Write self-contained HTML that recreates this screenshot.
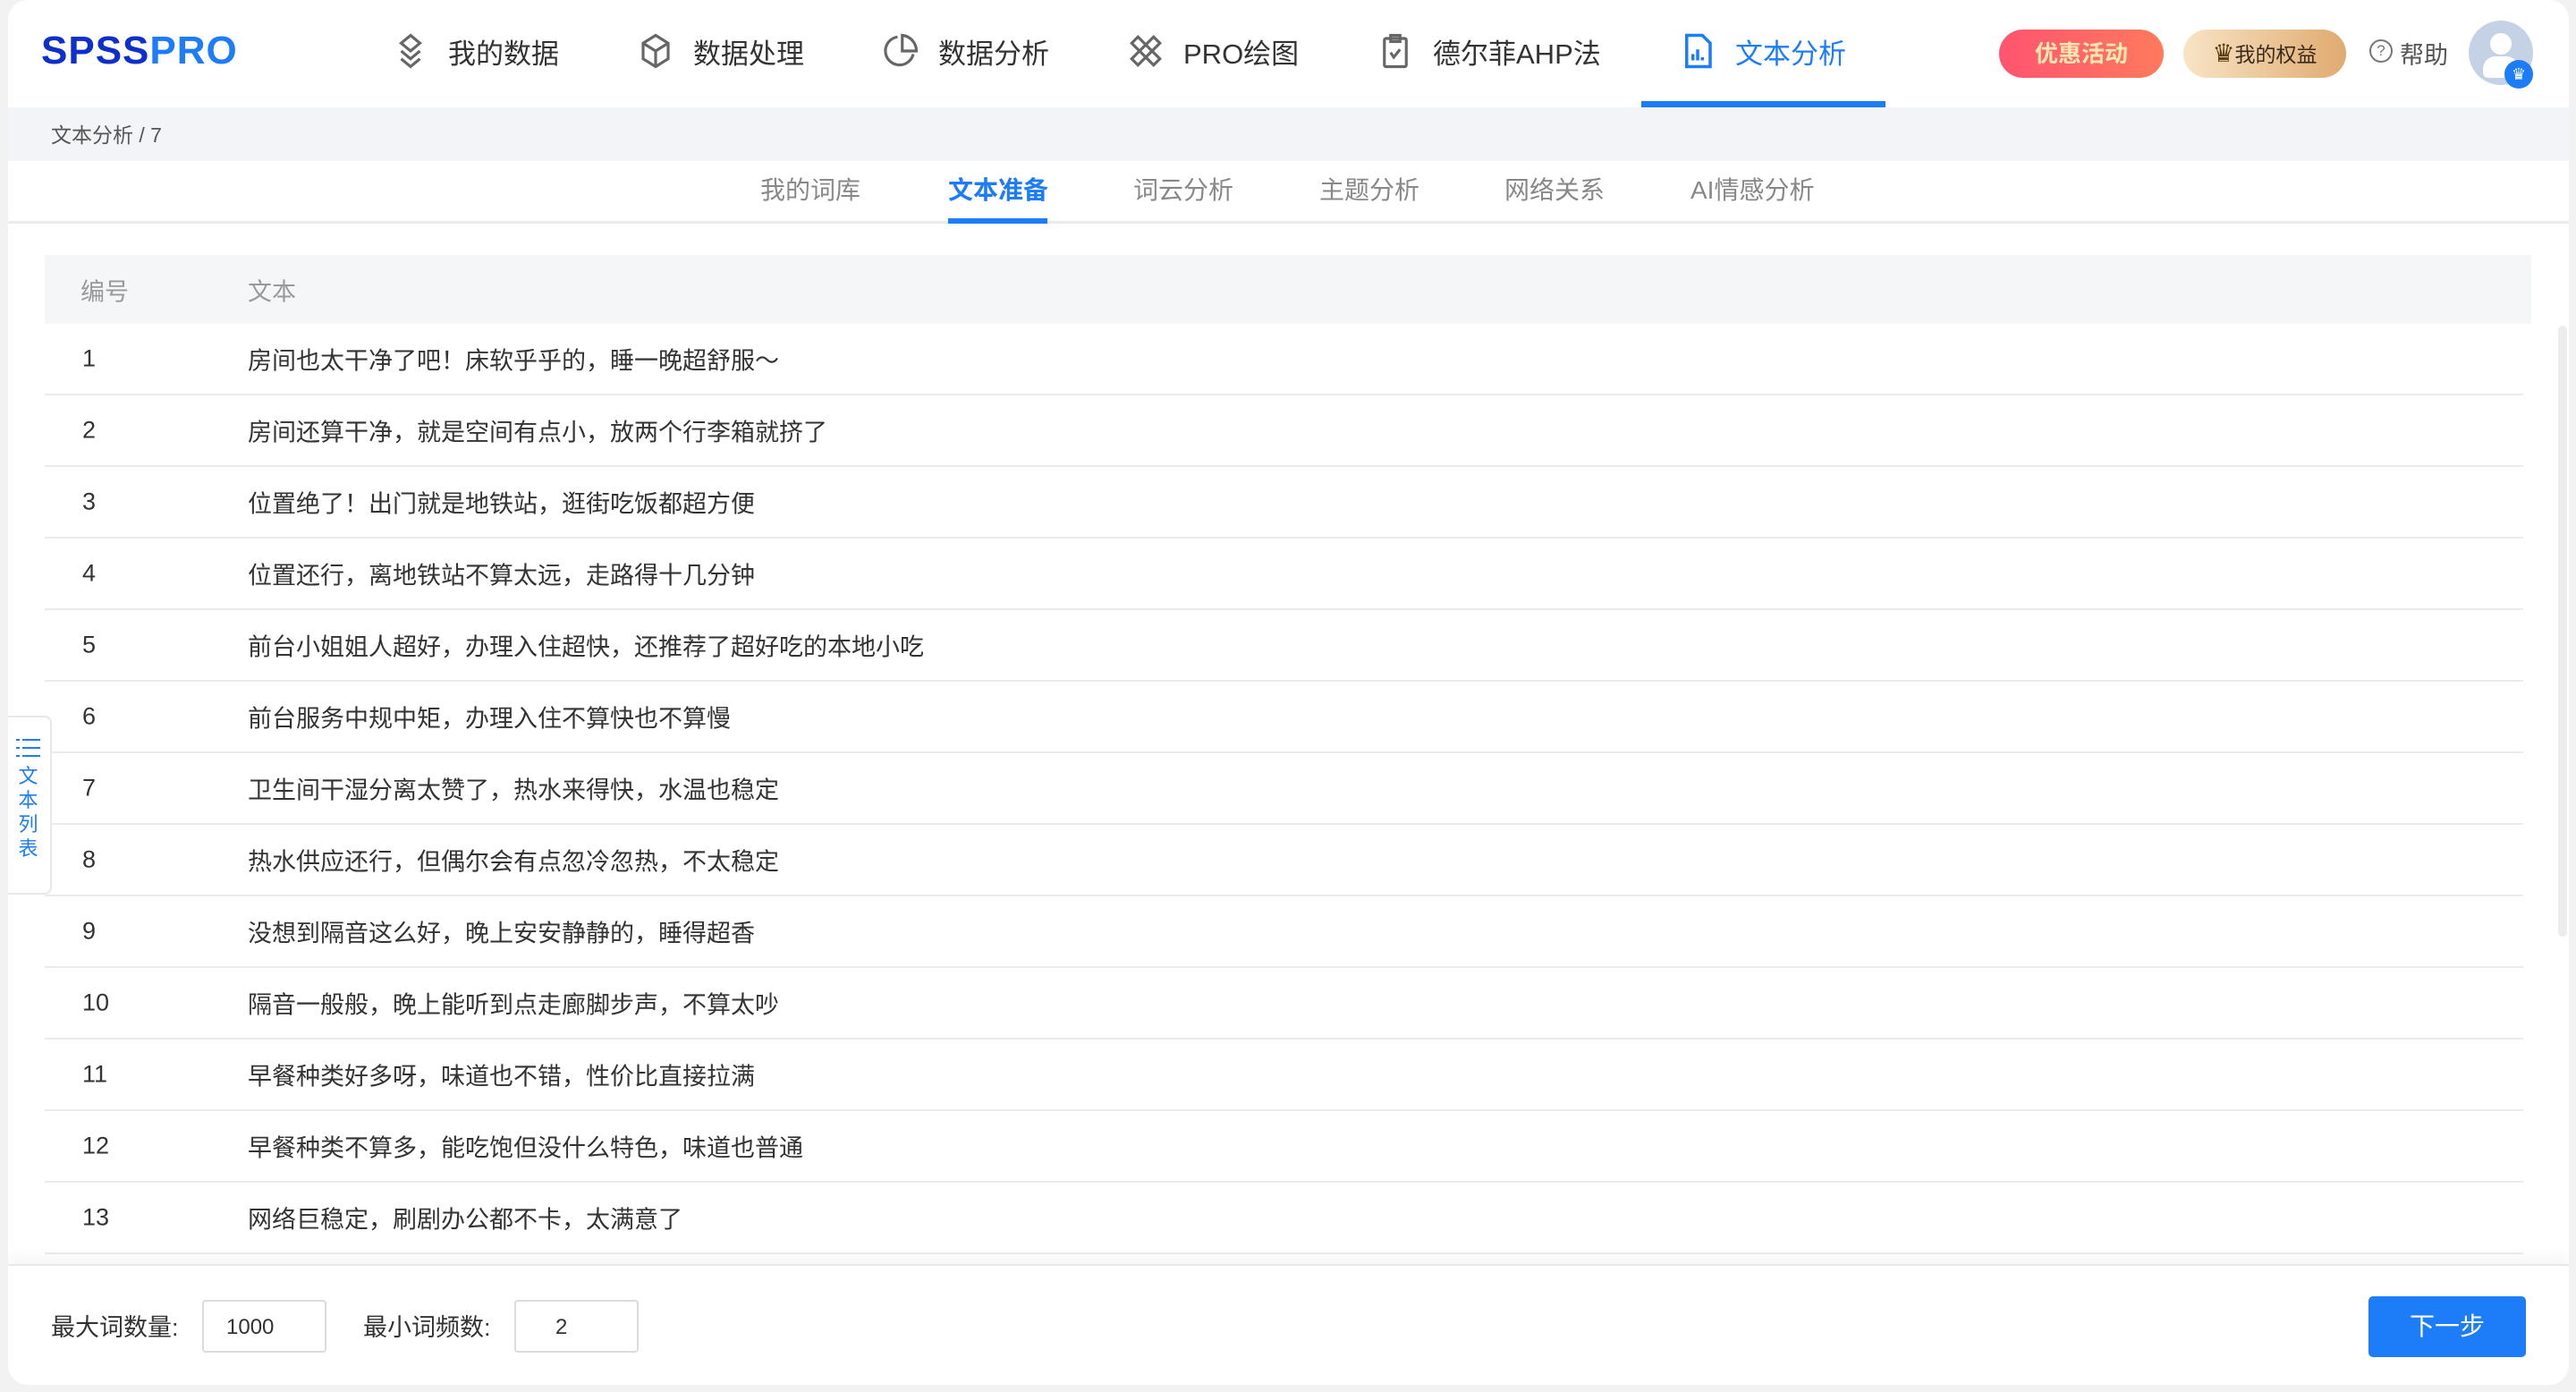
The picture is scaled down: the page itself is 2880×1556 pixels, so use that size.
<!DOCTYPE html>
<html><head><meta charset="utf-8"><style>
*{box-sizing:border-box;margin:0;padding:0}
body{width:2880px;height:1556px;background:#f2f2f2;font-family:"Liberation Sans","Noto Sans CJK SC",sans-serif;position:relative;overflow:hidden;color:#333}
.card{position:absolute;left:9px;top:0;width:2863px;height:1548px;background:#fff;overflow:hidden;border-radius:22px}
.abs{position:absolute}
.nav{position:absolute;top:0;left:0;width:100%;height:120px}
.logo{font-size:44px;font-weight:bold;letter-spacing:1px}
.ni{position:absolute;top:36px;font-size:31px;color:#333;display:flex;align-items:center;height:42px}
.ni svg{width:42px;height:42px;margin-right:21px}
.crumb{position:absolute;top:120px;left:0;width:100%;height:60px;background:#f3f4f7;font-size:23px;color:#555;padding:12px 0 0 48px}
.tabs{position:absolute;top:180px;left:0;width:100%;height:70px;border-bottom:3px solid #ebebeb}
.tab{position:absolute;top:11px;font-size:28px;color:#888}
.table{position:absolute;left:41px;top:285px;width:2780px;height:1120px;overflow:hidden}
.th{height:77px;background:#f5f6f8;font-size:27px;color:#999;position:relative}
.row{height:80px;border-bottom:2px solid #ebebeb;position:relative;font-size:27px;color:#333;width:2771px}
.c1{position:absolute;left:42px;top:50%;transform:translateY(-50%)}
.c2{position:absolute;left:227px;top:50%;transform:translateY(-50%)}
.bottom{position:absolute;left:0;top:1413px;width:100%;height:135px;border-top:2px solid #e8e8e8;box-shadow:0 -8px 14px rgba(0,0,0,0.04)}
.lbl{position:absolute;top:47px;font-size:27px;color:#333}
.inp{position:absolute;top:38px;width:139px;height:59px;border:2px solid #dcdcdc;border-radius:4px;font-size:24px;padding:15px 0 0 25px;color:#333}
</style></head><body>
<div class="card">
<div class="nav">
<div class="abs logo" style="left:37px;top:32px"><span style="color:#0f2fcc">SPSS</span><span style="color:#1d7cf7">PRO</span></div>
<div class="ni" style="left:429px"><svg viewBox="0 0 24 24" fill="none" stroke="#666" stroke-width="1.8"><path d="M12 2l6 5-6 5-6-5z"/><path d="M6 12l6 5 6-5M6 17l6 5 6-5"/></svg>我的数据</div>
<div class="ni" style="left:703px"><svg viewBox="0 0 24 24" fill="none" stroke="#666" stroke-width="1.8"><path d="M12 2l8 5v10l-8 5-8-5V7z"/><path d="M4 7l8 5 8-5M12 12v10"/></svg>数据处理</div>
<div class="ni" style="left:977px"><svg viewBox="0 0 24 24" fill="none" stroke="#666" stroke-width="1.8"><path d="M10 3a9 9 0 1 0 10 11"/><path d="M13 2v10h9A10 10 0 0 0 13 2z"/></svg>数据分析</div>
<div class="ni" style="left:1251px"><svg viewBox="0 0 24 24" fill="none" stroke="#666" stroke-width="1.8"><path d="M3 17L17 3l4 4L7 21zM7 3l14 14-4 4L3 7z"/></svg>PRO绘图</div>
<div class="ni" style="left:1530px"><svg viewBox="0 0 24 24" fill="none" stroke="#666" stroke-width="1.8"><rect x="5" y="4" width="14" height="18" rx="1"/><rect x="9" y="2" width="6" height="4"/><path d="M9 13l2 3 4-5"/></svg>德尔菲AHP法</div>
<div class="ni" style="left:1868px;color:#1d7cf7"><svg viewBox="0 0 24 24" fill="none" stroke="#1d7cf7" stroke-width="2"><path d="M5 2h10l5 5v15H5z"/><path d="M9 18v-4M12 18v-7M15 18v-2"/></svg>文本分析</div>
<div class="abs" style="left:1826px;top:113px;width:273px;height:7px;background:#1d7cf7"></div>
<div class="abs" style="left:2226px;top:33px;width:184px;height:54px;border-radius:27px;background:linear-gradient(90deg,#ff5470,#ff7a5c);color:#ffe8b0;font-size:26px;font-weight:bold;text-align:center;line-height:54px">优惠活动</div>
<div class="abs" style="left:2432px;top:33px;width:182px;height:54px;border-radius:27px;background:linear-gradient(90deg,#f8e4c6,#e0ab70);color:#3a2a1a;font-size:23px;text-align:center;line-height:54px"><span style="color:#5a3a10;font-size:28px">♛</span>我的权益</div>
<div class="abs" style="left:2640px;top:44px;width:26px;height:26px;border:2px solid #777;border-radius:50%;font-size:17px;text-align:center;line-height:22px;color:#777">?</div>
<div class="abs" style="left:2674px;top:40px;font-size:27px;color:#555">帮助</div>
<div class="abs" style="left:2751px;top:23px;width:72px;height:72px;border-radius:50%;background:#c5d2e6;overflow:hidden"><div class="abs" style="left:24px;top:14px;width:24px;height:24px;border-radius:50%;background:#fff"></div><div class="abs" style="left:16px;top:40px;width:40px;height:24px;border-radius:14px 14px 6px 6px;background:#fff"></div></div>
<div class="abs" style="left:2791px;top:67px;width:32px;height:32px;border-radius:50%;background:#1d7cf7;color:#fff;font-size:18px;text-align:center;line-height:32px">♛</div>
</div>
<div class="crumb">文本分析 / 7</div>
<div class="tabs">
<div class="tab" style="left:841px">我的词库</div>
<div class="tab" style="left:1051px;color:#1d7cf7;font-weight:bold">文本准备</div>
<div class="abs" style="left:1051px;top:64px;width:111px;height:6px;background:#1d7cf7"></div>
<div class="tab" style="left:1258px">词云分析</div>
<div class="tab" style="left:1466px">主题分析</div>
<div class="tab" style="left:1673px">网络关系</div>
<div class="tab" style="left:1881px">AI情感分析</div>
</div>
<div class="table">
<div class="th"><span class="c1" style="left:40px">编号</span><span class="c2">文本</span></div>
<div class="row"><span class="c1">1</span><span class="c2">房间也太干净了吧！床软乎乎的，睡一晚超舒服～</span></div>
<div class="row"><span class="c1">2</span><span class="c2">房间还算干净，就是空间有点小，放两个行李箱就挤了</span></div>
<div class="row"><span class="c1">3</span><span class="c2">位置绝了！出门就是地铁站，逛街吃饭都超方便</span></div>
<div class="row"><span class="c1">4</span><span class="c2">位置还行，离地铁站不算太远，走路得十几分钟</span></div>
<div class="row"><span class="c1">5</span><span class="c2">前台小姐姐人超好，办理入住超快，还推荐了超好吃的本地小吃</span></div>
<div class="row"><span class="c1">6</span><span class="c2">前台服务中规中矩，办理入住不算快也不算慢</span></div>
<div class="row"><span class="c1">7</span><span class="c2">卫生间干湿分离太赞了，热水来得快，水温也稳定</span></div>
<div class="row"><span class="c1">8</span><span class="c2">热水供应还行，但偶尔会有点忽冷忽热，不太稳定</span></div>
<div class="row"><span class="c1">9</span><span class="c2">没想到隔音这么好，晚上安安静静的，睡得超香</span></div>
<div class="row"><span class="c1">10</span><span class="c2">隔音一般般，晚上能听到点走廊脚步声，不算太吵</span></div>
<div class="row"><span class="c1">11</span><span class="c2">早餐种类好多呀，味道也不错，性价比直接拉满</span></div>
<div class="row"><span class="c1">12</span><span class="c2">早餐种类不算多，能吃饱但没什么特色，味道也普通</span></div>
<div class="row"><span class="c1">13</span><span class="c2">网络巨稳定，刷剧办公都不卡，太满意了</span></div>
<div class="row"><span class="c1">14</span><span class="c2"></span></div>
</div>
<div class="abs" style="left:2851px;top:364px;width:10px;height:683px;background:#ececec;border-radius:5px"></div>
<div class="abs" style="left:-2px;top:800px;width:51px;height:200px;background:#fff;border:2px solid #e8e8e8;border-left:none;border-radius:0 8px 8px 0;color:#1d7cf7;font-size:22px;text-align:center;line-height:27px;padding-top:22px">
<svg width="28" height="24" viewBox="0 0 28 24" style="display:block;margin:0 auto 6px"><g fill="#1d7cf7"><rect x="0" y="2" width="4" height="2"/><rect x="7" y="2" width="20" height="2"/><rect x="0" y="11" width="4" height="2"/><rect x="7" y="11" width="20" height="2"/><rect x="0" y="20" width="4" height="2"/><rect x="7" y="20" width="20" height="2"/></g></svg>文<br>本<br>列<br>表</div>
<div class="bottom">
<div class="lbl" style="left:48px">最大词数量:</div>
<div class="inp" style="left:217px">1000</div>
<div class="lbl" style="left:397px">最小词频数:</div>
<div class="inp" style="left:566px;padding-left:44px">2</div>
<div class="abs" style="left:2639px;top:34px;width:176px;height:68px;background:#1d7cf7;border-radius:5px;color:#fff;font-size:28px;text-align:center;line-height:68px">下一步</div>
</div>
</div>
</body></html>
